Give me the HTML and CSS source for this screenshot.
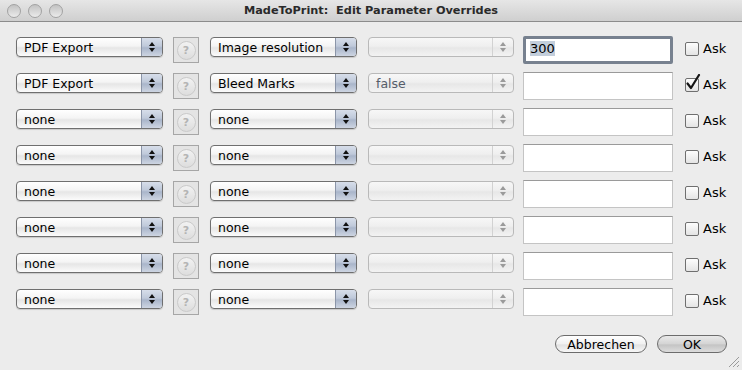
FILE: index.html
```html
<!DOCTYPE html>
<html lang="de">
<head>
    <meta charset="UTF-8">
    <title>MadeToPrint: Edit Parameter Overrides</title>
    <link rel="stylesheet" href="styles.css">
</head>
<body>
    <div class="window">
        <div class="titlebar">
            <div class="lights"><span></span><span></span><span></span></div>
            <div class="title">MadeToPrint:&nbsp; Edit Parameter Overrides</div>
        </div>

        <div class="content">
            <div class="rows">
                <div class="row">
                    <div class="popup"><span class="label">PDF Export</span><span class="stepper"><i class="up"></i><i class="down"></i></span></div>
                    <div class="help"><span>?</span></div>
                    <div class="popup"><span class="label">Image resolution</span><span class="stepper"><i class="up"></i><i class="down"></i></span></div>
                    <div class="popup disabled"><span class="label"></span><span class="stepper"><i class="up"></i><i class="down"></i></span></div>
                    <div class="field focused"><span class="sel">300</span></div>
                    <div class="check"><span class="box"></span>Ask</div>
                </div>
                <div class="row">
                    <div class="popup"><span class="label">PDF Export</span><span class="stepper"><i class="up"></i><i class="down"></i></span></div>
                    <div class="help"><span>?</span></div>
                    <div class="popup"><span class="label">Bleed Marks</span><span class="stepper"><i class="up"></i><i class="down"></i></span></div>
                    <div class="popup disabled"><span class="label">false</span><span class="stepper"><i class="up"></i><i class="down"></i></span></div>
                    <div class="field"></div>
                    <div class="check"><span class="box"><svg class="tick" width="16" height="17" viewBox="0 0 16 17"><path d="M2.5 9.5 L6 14 L14 1" stroke="#151515" stroke-width="2.2" fill="none" stroke-linecap="round" stroke-linejoin="round"/></svg></span>Ask</div>
                </div>
                <div class="row">
                    <div class="popup"><span class="label">none</span><span class="stepper"><i class="up"></i><i class="down"></i></span></div>
                    <div class="help"><span>?</span></div>
                    <div class="popup"><span class="label">none</span><span class="stepper"><i class="up"></i><i class="down"></i></span></div>
                    <div class="popup disabled"><span class="label"></span><span class="stepper"><i class="up"></i><i class="down"></i></span></div>
                    <div class="field"></div>
                    <div class="check"><span class="box"></span>Ask</div>
                </div>
                <div class="row">
                    <div class="popup"><span class="label">none</span><span class="stepper"><i class="up"></i><i class="down"></i></span></div>
                    <div class="help"><span>?</span></div>
                    <div class="popup"><span class="label">none</span><span class="stepper"><i class="up"></i><i class="down"></i></span></div>
                    <div class="popup disabled"><span class="label"></span><span class="stepper"><i class="up"></i><i class="down"></i></span></div>
                    <div class="field"></div>
                    <div class="check"><span class="box"></span>Ask</div>
                </div>
                <div class="row">
                    <div class="popup"><span class="label">none</span><span class="stepper"><i class="up"></i><i class="down"></i></span></div>
                    <div class="help"><span>?</span></div>
                    <div class="popup"><span class="label">none</span><span class="stepper"><i class="up"></i><i class="down"></i></span></div>
                    <div class="popup disabled"><span class="label"></span><span class="stepper"><i class="up"></i><i class="down"></i></span></div>
                    <div class="field"></div>
                    <div class="check"><span class="box"></span>Ask</div>
                </div>
                <div class="row">
                    <div class="popup"><span class="label">none</span><span class="stepper"><i class="up"></i><i class="down"></i></span></div>
                    <div class="help"><span>?</span></div>
                    <div class="popup"><span class="label">none</span><span class="stepper"><i class="up"></i><i class="down"></i></span></div>
                    <div class="popup disabled"><span class="label"></span><span class="stepper"><i class="up"></i><i class="down"></i></span></div>
                    <div class="field"></div>
                    <div class="check"><span class="box"></span>Ask</div>
                </div>
                <div class="row">
                    <div class="popup"><span class="label">none</span><span class="stepper"><i class="up"></i><i class="down"></i></span></div>
                    <div class="help"><span>?</span></div>
                    <div class="popup"><span class="label">none</span><span class="stepper"><i class="up"></i><i class="down"></i></span></div>
                    <div class="popup disabled"><span class="label"></span><span class="stepper"><i class="up"></i><i class="down"></i></span></div>
                    <div class="field"></div>
                    <div class="check"><span class="box"></span>Ask</div>
                </div>
                <div class="row">
                    <div class="popup"><span class="label">none</span><span class="stepper"><i class="up"></i><i class="down"></i></span></div>
                    <div class="help"><span>?</span></div>
                    <div class="popup"><span class="label">none</span><span class="stepper"><i class="up"></i><i class="down"></i></span></div>
                    <div class="popup disabled"><span class="label"></span><span class="stepper"><i class="up"></i><i class="down"></i></span></div>
                    <div class="field"></div>
                    <div class="check"><span class="box"></span>Ask</div>
                </div>
            </div>

            <div class="buttons">
                <button class="btn">Abbrechen</button>
                <button class="btn default">OK</button>
            </div>
        </div>

        <svg class="grip" width="12" height="12" viewBox="0 0 12 12">
            <path d="M11 1 L1 11 M11 5 L5 11 M11 9 L9 11" stroke="#9a9a9a" stroke-width="1" fill="none"/>
        </svg>
    </div>
</body>
</html>
```

FILE: styles.css
```css
* {
    margin: 0;
    padding: 0;
    box-sizing: border-box;
}

body {
    font-family: 'DejaVu Sans', 'Liberation Sans', sans-serif;
    font-size: 12.5px;
    color: #000;
    background: #ececec;
}

.window {
    position: relative;
    width: 742px;
    height: 370px;
    background: #ececec;
    overflow: hidden;
}

.titlebar {
    height: 22px;
    background: linear-gradient(#e6e6e6, #cfcfcf);
    border-bottom: 1px solid #8c8c8c;
    display: flex;
    align-items: center;
    position: relative;
}

.lights {
    display: flex;
    gap: 7px;
    padding-left: 7px;
}

.lights span {
    width: 14px;
    height: 14px;
    border-radius: 50%;
    background: linear-gradient(#c2c2c2, #ebebeb);
    border: 1px solid #a2a2a2;
}

.title {
    flex: 1;
    text-align: center;
    font-size: 11.3px;
    font-weight: bold;
    color: #2a2a2a;
    margin-right: 63px;
}

.content {
    padding: 14px 15px 0 16px;
}

.rows {
    display: flex;
    flex-direction: column;
}

.row {
    height: 36px;
    display: flex;
    align-items: flex-start;
}

.popup {
    width: 147px;
    height: 20px;
    margin-top: 1px;
    display: flex;
    border: 1px solid #6f6f6f;
    border-radius: 4px;
    background: linear-gradient(#ffffff 0%, #f4f4f4 45%, #e6e6e6 55%, #fbfbfb 100%);
    box-shadow: 0 1px 1px rgba(0,0,0,0.15);
    overflow: hidden;
}

.popup .label {
    flex: 1;
    padding-left: 7px;
    line-height: 19px;
    white-space: nowrap;
}

.stepper {
    width: 21px;
    border-left: 1px solid #8b95a8;
    background: linear-gradient(#d7deea 0%, #bfc9da 45%, #a9b5ca 55%, #cdd5e2 100%);
    display: flex;
    flex-direction: column;
    align-items: center;
    justify-content: center;
    gap: 2px;
}

.stepper i {
    width: 0;
    height: 0;
    border-left: 3px solid transparent;
    border-right: 3px solid transparent;
}

.stepper .up {
    border-bottom: 4px solid #111;
}

.stepper .down {
    border-top: 4px solid #111;
}

.help {
    width: 26px;
    height: 26px;
    margin: 1px 11px 0 10px;
    border: 1px solid #a6a6a6;
    background: #e4e4e4;
    display: flex;
    align-items: center;
    justify-content: center;
}

.help span {
    width: 19px;
    height: 19px;
    border-radius: 50%;
    border: 1px solid #cacaca;
    background: linear-gradient(#f2f2f2, #dddddd);
    color: #b4b4b4;
    font-size: 11px;
    font-weight: bold;
    line-height: 17px;
    text-align: center;
}

.popup.disabled {
    width: 146px;
    margin-left: 11px;
    border-color: #b9b9b9;
    background: linear-gradient(#f7f7f7 0%, #efefef 45%, #e7e7e7 55%, #f3f3f3 100%);
    box-shadow: none;
}

.popup.disabled .label {
    color: #555d6a;
}

.popup.disabled .stepper {
    border-left: 1px solid #d2d2d2;
    background: transparent;
}

.popup.disabled .stepper .up {
    border-bottom-color: #9a9a9a;
}

.popup.disabled .stepper .down {
    border-top-color: #9a9a9a;
}

.field {
    width: 150px;
    height: 28px;
    margin-left: 9px;
    background: #fff;
    border: 1px solid #c4c4c4;
    border-top-color: #9a9a9a;
    padding: 3px 4px;
}

.field.focused {
    border: 3px solid #77818f;
    border-radius: 2px;
    padding: 1px 4px;
}

.sel {
    background: #c3cedb;
    font-size: 13px;
    line-height: 18px;
}

.check {
    display: flex;
    align-items: center;
    gap: 4px;
    margin: 5px 0 0 12px;
    font-size: 13px;
}

.box {
    position: relative;
    width: 14px;
    height: 14px;
    border: 1px solid #6f6f6f;
    border-radius: 2px;
    background: linear-gradient(#fdfdfd, #e4e4e4);
}

.tick {
    position: absolute;
    left: -1px;
    top: -5px;
}

.buttons {
    display: flex;
    justify-content: flex-end;
    gap: 10px;
    margin-top: 11px;
}

.btn {
    font-family: 'DejaVu Sans', 'Liberation Sans', sans-serif;
    font-size: 12.5px;
    height: 18px;
    border: 1px solid #6c6c6c;
    border-radius: 9px;
    background: linear-gradient(#ffffff 0%, #f1f1f1 50%, #e2e2e2 55%, #f7f7f7 100%);
    color: #000;
    width: 92px;
    line-height: 15px;
}

.btn.default {
    width: 70px;
    background: linear-gradient(#e9e9e9 0%, #d4d4d4 50%, #c4c4c4 55%, #dcdcdc 100%);
}

.grip {
    position: absolute;
    right: 2px;
    bottom: 2px;
}
```
